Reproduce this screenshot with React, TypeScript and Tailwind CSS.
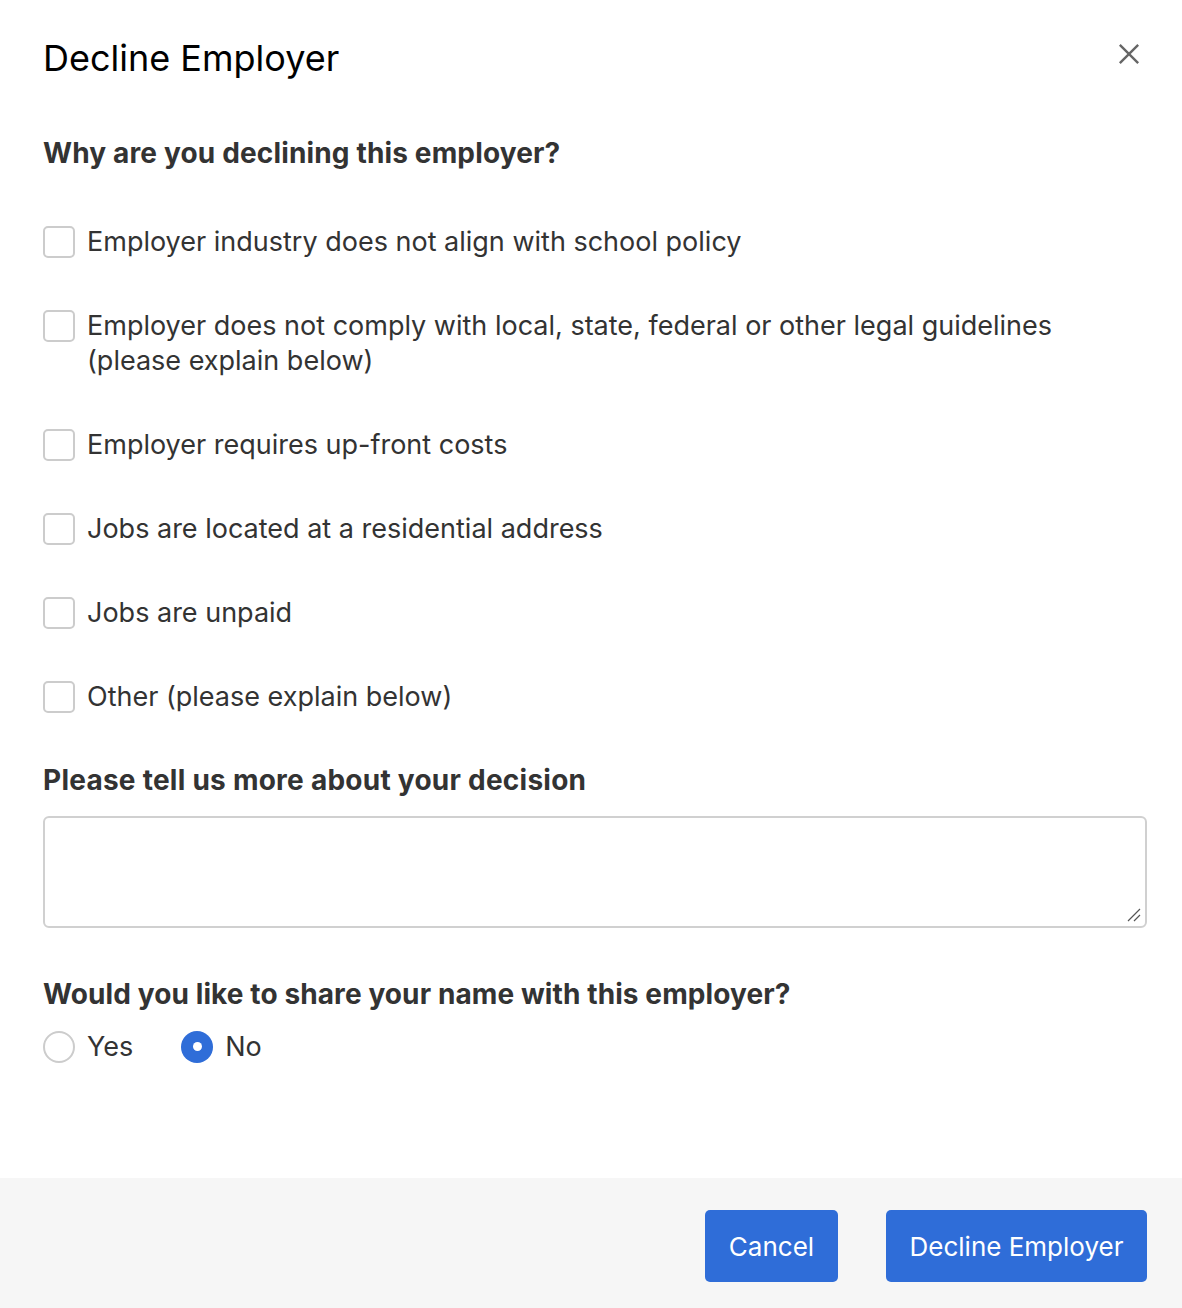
import React from "react";

const options: string[][] = [
  ["Employer industry does not align with school policy"],
  ["Employer does not comply with local, state, federal or other legal guidelines", "(please explain below)"],
  ["Employer requires up-front costs"],
  ["Jobs are located at a residential address"],
  ["Jobs are unpaid"],
  ["Other (please explain below)"],
];

export default function App() {
  return (
    <div
      className="w-[1182px] h-[1308px] bg-white flex flex-col text-[#333]"
      style={{ fontFamily: "Inter, 'Noto Sans', sans-serif" }}
    >
      <div className="flex-1 flex flex-col pl-[44px] pr-[35px]">
        <div className="flex items-start justify-between pt-[38px]">
          <h1 className="text-[36px] leading-[40px] text-black font-normal -ml-[1px]">Decline Employer</h1>
          <button className="mt-[5px] mr-[7px] w-[22px] h-[22px] flex items-center justify-center">
            <svg width="24" height="24" viewBox="0 0 24 24" fill="none">
              <path d="M2 2 L22 22 M22 2 L2 22" stroke="#666" strokeWidth="2.6" strokeLinecap="butt" />
            </svg>
          </button>
        </div>

        <h2 className="mt-[58px] text-[28px] leading-[35px] font-bold tracking-[0.15px] text-[#333] -ml-[1px]">
          Why are you declining this employer?
        </h2>

        <div className="mt-[53px] flex flex-col gap-[49px]">
          {options.map((lines, i) => (
            <label key={i} className="flex items-start gap-[12px]">
              <span className="mt-[1.5px] ml-[-1px] w-[32px] h-[32px] shrink-0 rounded-[5px] border-2 border-[#cccccc] bg-white" />
              <span className="text-[27px] leading-[35px] text-[#333]">
                {lines.map((l, j) => (
                  <span key={j} className="block">
                    {l}
                  </span>
                ))}
              </span>
            </label>
          ))}
        </div>

        <h2 className="mt-[49px] text-[28px] leading-[35px] font-bold tracking-[0.25px] text-[#333] -ml-[1px]">
          Please tell us more about your decision
        </h2>
        <div className="relative mt-[18px] ml-[-1px] h-[112px] rounded-[6px] border-2 border-[#d0d0d0] bg-white">
          <svg className="absolute right-[3px] bottom-[3px]" width="16" height="16" viewBox="0 0 16 16">
            <path d="M2 14 L14 2 M8 14 L14 8" stroke="#555" strokeWidth="1.2" />
          </svg>
        </div>

        <h2 className="mt-[49px] text-[28px] leading-[35px] font-bold tracking-[0.1px] text-[#333] -ml-[1px]">
          Would you like to share your name with this employer?
        </h2>
        <div className="mt-[17px] flex items-center">
          <label className="flex items-center gap-[12px]">
            <span className="ml-[-1px] w-[32px] h-[32px] rounded-full border-2 border-[#cccccc] bg-white" />
            <span className="text-[27px] leading-[35px] text-[#333]">Yes</span>
          </label>
          <label className="ml-[48px] flex items-center gap-[12px]">
            <span className="w-[32px] h-[32px] rounded-full bg-[#2f6dd8] flex items-center justify-center">
              <span className="w-[9px] h-[9px] rounded-full bg-white" />
            </span>
            <span className="text-[27px] leading-[35px] text-[#333]">No</span>
          </label>
        </div>
      </div>

      <div className="h-[130px] bg-[#f6f6f6] flex justify-end items-start pt-[32px] pr-[35px] gap-[48px]">
        <button className="h-[72px] w-[133px] rounded-[5px] bg-[#2f6dd8] text-white text-[26px] font-normal">
          Cancel
        </button>
        <button className="h-[72px] w-[261px] rounded-[5px] bg-[#2f6dd8] text-white text-[26px] font-normal">
          Decline Employer
        </button>
      </div>
    </div>
  );
}
